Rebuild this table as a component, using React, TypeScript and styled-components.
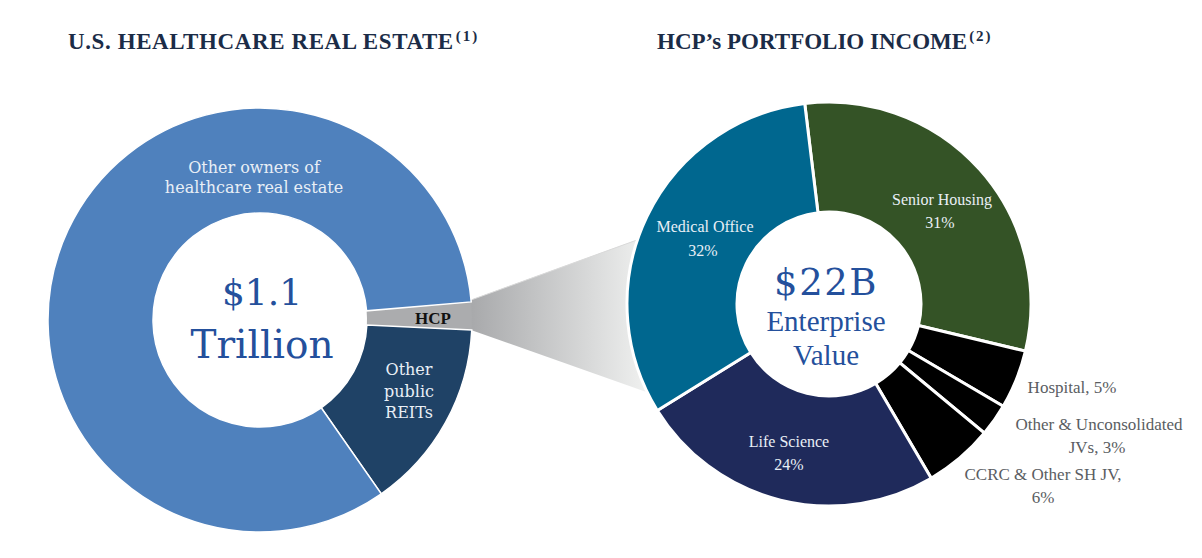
import * as React from "react";
import styled, { createGlobalStyle } from "styled-components";

const colors = {
  title: "#1b2c47",
  figure: "#24509c",
  light: "#e9eff6",
  muted: "#5a5d62",
  hcp: "#abacae",
  reits: "#1f4266",
  owners: "#4f81bd",
  medical: "#00678f",
  senior: "#345326",
  life: "#1f2a5b",
  other: "#000000",
};

type Slice = { from: number; to: number; fill: string; edge?: boolean };

// angles are degrees clockwise from 12 o'clock
const arcPath = (cx: number, cy: number, r0: number, r1: number, a0: number, a1: number) => {
  const pt = (r: number, a: number) => {
    const t = (a * Math.PI) / 180;
    return `${(cx + r * Math.sin(t)).toFixed(2)} ${(cy - r * Math.cos(t)).toFixed(2)}`;
  };
  const large = a1 - a0 > 180 ? 1 : 0;
  return `M${pt(r1, a0)} A${r1} ${r1} 0 ${large} 1 ${pt(r1, a1)} L${pt(r0, a1)} A${r0} ${r0} 0 ${large} 0 ${pt(r0, a0)}Z`;
};

const marketSlices: Slice[] = [
  { from: 85.1, to: 92.7, fill: colors.hcp, edge: false },
  { from: 92.7, to: 145.1, fill: colors.reits },
  { from: 145.1, to: 445.1, fill: colors.owners },
];

const portfolioSlices: Slice[] = [
  { from: -6.9, to: 103.5, fill: colors.senior },
  { from: 103.5, to: 120.4, fill: colors.other },
  { from: 120.4, to: 129.7, fill: colors.other },
  { from: 129.7, to: 149.6, fill: colors.other },
  { from: 149.6, to: 238.2, fill: colors.life },
  { from: 238.2, to: 353.1, fill: colors.medical },
];

const App: React.FC = () => {
  return (
    <>
      <GlobalStyle />
      <Slide>
        <Header>
          <Title $spread={0.6}>
            U.S. HEALTHCARE REAL ESTATE<Note>(1)</Note>
          </Title>
          <Title>
            HCP’s PORTFOLIO INCOME<Note>(2)</Note>
          </Title>
        </Header>
        <Chart viewBox="0 60 1202 498" width={1202} height={498}>
          <defs>
            <linearGradient id="funnel" gradientUnits="userSpaceOnUse" x1="471" y1="0" x2="650" y2="0">
              <stop offset="0" stopColor="#a8a9ab" />
              <stop offset="1" stopColor="#f1f2f1" />
            </linearGradient>
          </defs>

          <polygon points="466,301.8 700,217 700,411 466,328.2" fill="url(#funnel)" />
          <line x1="471" y1="300" x2="637" y2="240" stroke="#d9d9d9" strokeWidth="1" />

          {marketSlices.map((s, i) => (
            <path
              key={i}
              d={arcPath(260, 320, 107, 212, s.from, s.to)}
              fill={s.fill}
              stroke={s.edge === false ? "none" : "#ffffff"}
              strokeWidth={1.5}
            />
          ))}

          {portfolioSlices.map((s, i) => (
            <path
              key={i}
              d={arcPath(829, 304, 92, 202, s.from, s.to)}
              fill={s.fill}
              stroke="#ffffff"
              strokeWidth={3}
            />
          ))}

          <Label $tone="light" $face="wide" x={254} y={173}>Other owners of</Label>
          <Label $tone="light" $face="wide" x={254} y={193}>healthcare real estate</Label>
          <Label $tone="light" $face="wide" x={409} y={375}>Other</Label>
          <Label $tone="light" $face="wide" x={409} y={397}>public</Label>
          <Label $tone="light" $face="wide" x={409} y={418}>REITs</Label>
          <Tag x={433} y={324}>HCP</Tag>

          <Figure $size={36} x={262} y={305}>$1.1</Figure>
          <Figure $size={39} x={262} y={358}>Trillion</Figure>

          <Label $tone="light" x={705} y={232}>Medical Office</Label>
          <Label $tone="light" x={703} y={256}>32%</Label>
          <Label $tone="light" x={942} y={205}>Senior Housing</Label>
          <Label $tone="light" x={940} y={228}>31%</Label>
          <Label $tone="light" x={789} y={447}>Life Science</Label>
          <Label $tone="light" x={789} y={470}>24%</Label>

          <Figure $size={37} $spread={1.5} x={826} y={295}>$22B</Figure>
          <Figure $size={29} $face="narrow" x={826} y={331}>Enterprise</Figure>
          <Figure $size={29} $face="narrow" x={826} y={365}>Value</Figure>

          <Label $tone="muted" $size={17} x={1072} y={393}>Hospital, 5%</Label>
          <Label $tone="muted" $size={17} x={1099} y={430}>Other &amp; Unconsolidated</Label>
          <Label $tone="muted" $size={17} x={1097} y={453}>JVs, 3%</Label>
          <Label $tone="muted" $size={17} x={1043} y={480}>CCRC &amp; Other SH JV,</Label>
          <Label $tone="muted" $size={17} x={1043} y={503}>6%</Label>
        </Chart>
      </Slide>
    </>
  );
};

const GlobalStyle = createGlobalStyle`
  html, body {
    margin: 0;
    background: #ffffff;
  }
`;

const Slide = styled.div`
  width: 1202px;
  height: 558px;
  overflow: hidden;
  background: #ffffff;
`;

const Header = styled.header`
  box-sizing: border-box;
  display: grid;
  grid-template-columns: 589px 1fr;
  height: 60px;
  padding: 29px 0 0 68px;
`;

const Title = styled.h1<{ $spread?: number }>`
  margin: 0;
  color: ${colors.title};
  font-family: "Liberation Serif", "DejaVu Serif", serif;
  font-size: 23px;
  font-weight: 700;
  letter-spacing: ${(p) => p.$spread ?? 0}px;
  line-height: 23px;
  white-space: nowrap;
`;

const Note = styled.span`
  display: inline-block;
  margin-left: 2px;
  font-size: 15px;
  letter-spacing: 2px;
  vertical-align: 8px;
  line-height: 1;
`;

const Chart = styled.svg`
  display: block;
`;

const Label = styled.text<{ $tone: "light" | "muted"; $face?: "wide" | "narrow"; $size?: number }>`
  fill: ${(p) => (p.$tone === "light" ? colors.light : colors.muted)};
  font-family: ${(p) =>
    p.$face === "wide" ? `"DejaVu Serif", serif` : `"Liberation Serif", "DejaVu Serif", serif`};
  font-size: ${(p) => p.$size ?? 16}px;
  text-anchor: middle;
`;

const Tag = styled.text`
  fill: #111111;
  font-family: "Liberation Serif", serif;
  font-size: 17px;
  font-weight: 700;
  text-anchor: middle;
`;

const Figure = styled.text<{ $size: number; $face?: "narrow"; $spread?: number }>`
  fill: ${colors.figure};
  font-family: ${(p) =>
    p.$face === "narrow" ? `"Liberation Serif", serif` : `"DejaVu Serif", serif`};
  font-size: ${(p) => p.$size}px;
  letter-spacing: ${(p) => p.$spread ?? 0}px;
  text-anchor: middle;
`;

export default App;
